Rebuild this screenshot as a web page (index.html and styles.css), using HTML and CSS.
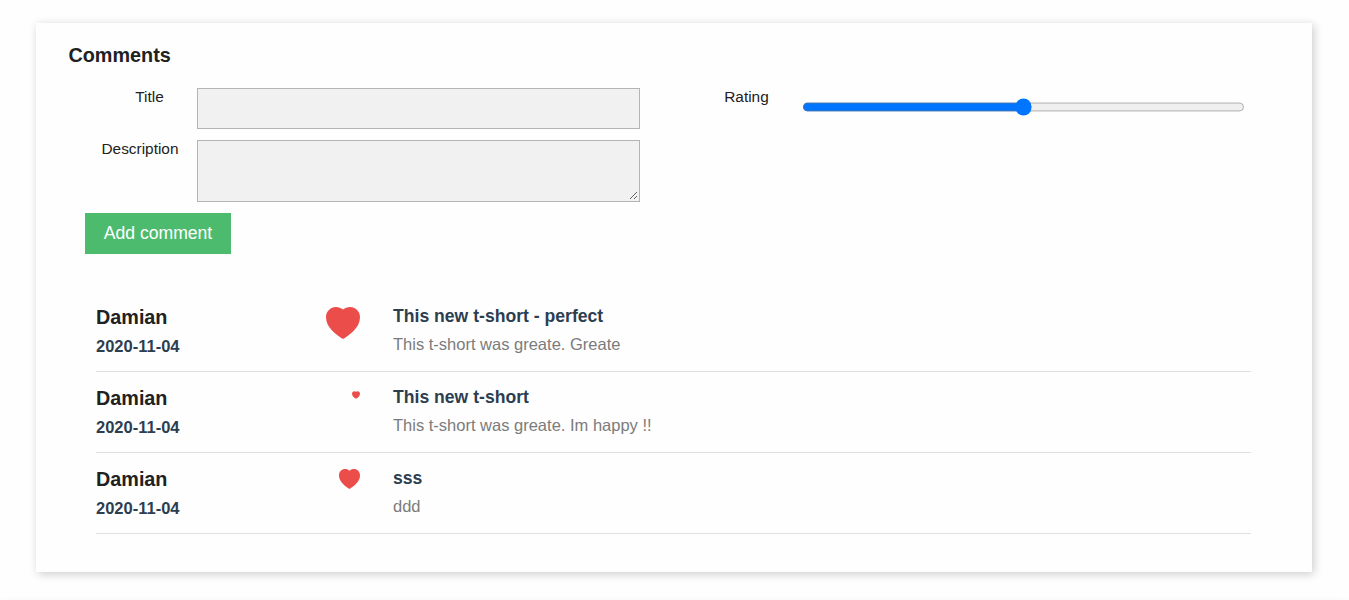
FILE: index.html
```html
<!DOCTYPE html>
<html lang="en">
<head>
<meta charset="utf-8">
<title>Comments</title>
<link rel="stylesheet" href="styles.css">
</head>
<body>
<section class="card">
  <h2 class="heading">Comments</h2>
  <form class="form">
    <div class="fields">
      <label class="label label-title" for="title">Title</label>
      <input class="control" id="title" type="text">
      <label class="label label-rating" for="rating">Rating</label>
      <input class="range" id="rating" type="range" min="0" max="10" value="5">
      <label class="label label-description" for="description">Description</label>
      <textarea class="control area" id="description"></textarea>
    </div>
    <button class="submit" type="button">Add comment</button>
  </form>
  <div class="list">
    <article class="comment">
      <div class="author"><h3 class="name">Damian</h3><p class="date">2020-11-04</p></div>
      <div class="rate"><svg class="heart large" viewBox="0 0 34 32"><path d="M17 32C11 28 0 21 0 10.2 0 4.3 4.4 0 10 0 12.6 0 15 .9 17 2.5 19 .9 21.4 0 24 0 29.6 0 34 4.3 34 10.2 34 21 23 28 17 32Z"/></svg></div>
      <div class="text"><h4 class="title">This new t-short - perfect</h4><p class="body">This t-short was greate. Greate</p></div>
    </article>
    <article class="comment">
      <div class="author"><h3 class="name">Damian</h3><p class="date">2020-11-04</p></div>
      <div class="rate"><svg class="heart small" viewBox="0 0 34 32"><path d="M17 32C11 28 0 21 0 10.2 0 4.3 4.4 0 10 0 12.6 0 15 .9 17 2.5 19 .9 21.4 0 24 0 29.6 0 34 4.3 34 10.2 34 21 23 28 17 32Z"/></svg></div>
      <div class="text"><h4 class="title">This new t-short</h4><p class="body">This t-short was greate. Im happy !!</p></div>
    </article>
    <article class="comment">
      <div class="author"><h3 class="name">Damian</h3><p class="date">2020-11-04</p></div>
      <div class="rate"><svg class="heart medium" viewBox="0 0 34 32"><path d="M17 32C11 28 0 21 0 10.2 0 4.3 4.4 0 10 0 12.6 0 15 .9 17 2.5 19 .9 21.4 0 24 0 29.6 0 34 4.3 34 10.2 34 21 23 28 17 32Z"/></svg></div>
      <div class="text"><h4 class="title">sss</h4><p class="body">ddd</p></div>
    </article>
  </div>
</section>
<footer class="footer"></footer>
</body>
</html>
```
FILE: styles.css
```css
* { box-sizing: border-box; }
html { background: #fefefe; }
body {
  height: 600px;
  margin: 0;
  padding-top: 23px;
  overflow: hidden;
  color: #212121;
  font-family: "Liberation Sans", Arial, sans-serif;
}
h2, h3, h4, p { margin: 0; }
.card {
  height: 549px;
  margin: 0 37px 32px 36px;
  padding: 20px 32px 0 32.5px;
  background: #fefefe;
  box-shadow: 2px 2px 9px rgba(0, 0, 0, .2);
}
.footer { height: 20px; box-shadow: 0 0 10px rgba(0, 0, 0, .1); }
.heading { font-size: 19.8px; line-height: 24px; }
.form { padding: 21px 36px 0 16.5px; }
.fields {
  display: grid;
  grid-template-columns: 112px 443px 162px 443px;
  grid-template-rows: 41px 62px;
  row-gap: 11px;
}
.label {
  font-size: 15.4px;
  line-height: 18px;
  text-align: center;
}
.label-title { padding-left: 17px; }
.label-rating { padding-left: 51px; }
.label-description { padding-right: 2px; }
.control {
  width: 100%;
  height: 100%;
  border: 1px solid #b4b4b4;
  background: #f1f1f1;
}
.area {
  display: block;
  border: 2px solid #f1f1f1;
  outline: 1px solid #b4b4b4;
  outline-offset: -1px;
  resize: vertical;
}
.range {
  width: 100%;
  height: 16px;
  margin: 9.3px 0 0;
  zoom: 1.1;
}
.submit {
  display: block;
  width: 146px;
  height: 41px;
  margin-top: 11px;
  padding: 0;
  border: 0;
  background: #4dbb6d;
  color: #fff;
  font-family: inherit;
  font-size: 17.6px;
}
.list { width: 1155px; margin: 37px 0 0 27.5px; }
.comment {
  display: grid;
  grid-template-columns: 230px 34px 1fr;
  height: 81px;
  padding-top: 14px;
  border-bottom: 1px solid #e0e0e0;
}
.name { font-size: 19.8px; line-height: 24px; }
.date {
  margin-top: 7px;
  color: #2c3e50;
  font-size: 16.5px;
  font-weight: 700;
  line-height: 20px;
}
.rate { display: flex; justify-content: flex-end; align-items: flex-start; padding-top: 2px; }
.heart { display: block; fill: #eb4d4b; }
.large { width: 34px; height: 32px; }
.medium { width: 21px; height: 20px; }
.small { width: 8px; height: 8px; margin-top: 3px; }
.text { padding-left: 33px; }
.title { color: #2c3e50; font-size: 17.6px; line-height: 22px; }
.body { margin-top: 7px; color: #7b7b7b; font-size: 16.5px; line-height: 20px; }
```
